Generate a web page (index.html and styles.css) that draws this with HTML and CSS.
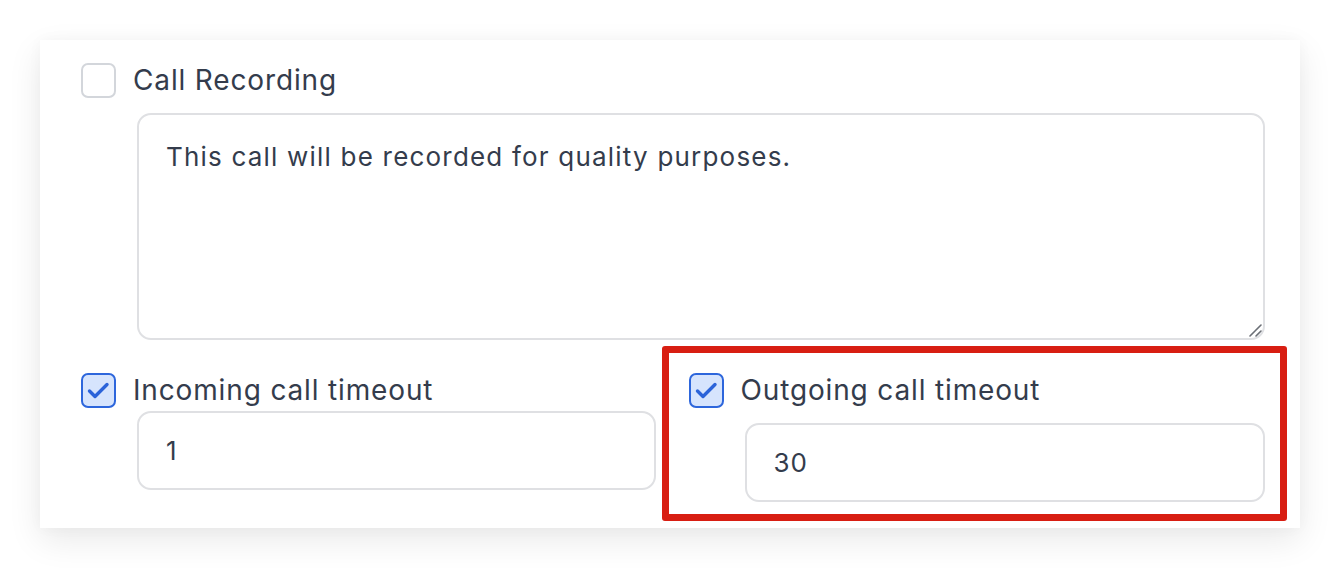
FILE: index.html
```html
<!DOCTYPE html>
<html>
<head>
<meta charset="utf-8">
<link rel="stylesheet" href="styles.css">
</head>
<body>
<div class="card">
  <div class="check-row">
    <span class="box"></span>
    <span class="label">Call Recording</span>
  </div>
  <div class="textarea">
    <div class="ta-text">This call will be recorded for quality purposes.</div>
    <svg class="grip" width="14" height="14" viewBox="0 0 14 14"><path d="M2 13 L13 2 M8 13 L13 8" stroke="#6b6f76" stroke-width="1.6" stroke-linecap="round"/></svg>
  </div>
  <div class="row">
    <div class="field field-left">
      <div class="check-row">
        <span class="box checked"><svg width="31" height="31" viewBox="0 0 31 31"><path d="M6.5 16 L12 21.5 L24 9.5" fill="none" stroke="#2b63d9" stroke-width="3.4" stroke-linecap="round" stroke-linejoin="round"/></svg></span>
        <span class="label">Incoming call timeout</span>
      </div>
      <div class="input">1</div>
    </div>
    <div class="field field-right">
      <div class="check-row">
        <span class="box checked"><svg width="31" height="31" viewBox="0 0 31 31"><path d="M6.5 16 L12 21.5 L24 9.5" fill="none" stroke="#2b63d9" stroke-width="3.4" stroke-linecap="round" stroke-linejoin="round"/></svg></span>
        <span class="label">Outgoing call timeout</span>
      </div>
      <div class="input input-right">30</div>
    </div>
  </div>
</div>
</body>
</html>
```

FILE: styles.css
```css
* { box-sizing: border-box; }
html, body { margin: 0; padding: 0; background: #ffffff; }
body {
  width: 1340px;
  height: 568px;
  padding: 40px;
  font-family: Inter, "Noto Sans", sans-serif;
  color: #343c4c;
  overflow: hidden;
}
.card {
  width: 1260px;
  height: 488px;
  background: #ffffff;
  box-shadow: 0 12px 32px rgba(0, 0, 0, 0.09), 0 0 14px rgba(0, 0, 0, 0.03);
  padding: 23px 13px 0 41px;
}
.check-row {
  display: flex;
  align-items: center;
  height: 35px;
}
.box {
  width: 35px;
  height: 35px;
  border: 2px solid #d3d6db;
  border-radius: 7px;
  background: #fff;
  flex: none;
  display: flex;
  align-items: center;
  justify-content: center;
}
.box.checked {
  background: #d6e4fd;
  border-color: #2d66dc;
}
.label {
  margin-left: 17px;
  font-size: 28px;
  letter-spacing: 0.85px;
  line-height: 35px;
}
.textarea {
  position: relative;
  margin: 15px 22px 0 56px;
  height: 227px;
  border: 2px solid #dfe0e3;
  border-radius: 14px;
  padding: 23px 27px;
  font-size: 26px;
  letter-spacing: 1.2px;
  line-height: 38px;
}
.grip {
  position: absolute;
  right: 1px;
  bottom: 1px;
}
.row {
  display: flex;
  align-items: flex-start;
  margin-top: 6px;
}
.field-left {
  width: 575px;
  padding-top: 27px;
}
.field-right {
  width: 626px;
  margin-left: 6px;
  border: 7px solid #d81e12;
  border-radius: 3px;
  padding: 20px 15px 11px 20px;
  height: 175px;
}
.input {
  margin-top: 3px;
  margin-left: 56px;
  height: 79px;
  border: 2px solid #dfe0e3;
  border-radius: 14px;
  padding: 0 27px;
  display: flex;
  align-items: center;
  font-size: 26px;
  letter-spacing: 1px;
}
.input-right {
  margin-top: 15px;
}
```
